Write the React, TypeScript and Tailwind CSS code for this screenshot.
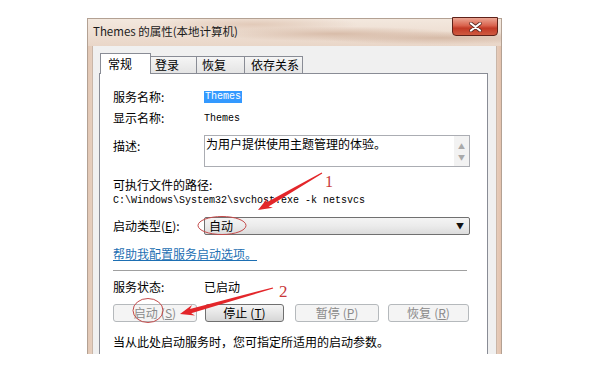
import React from 'react';

const cjk = "font-['Noto_Sans_CJK_SC','Noto_Sans',sans-serif]";
const mono = "font-['Liberation_Mono',monospace]";

// tapered arrow polygon from tail (x1,y1) to tip (x2,y2)
function arrowPoints(x1: number, y1: number, x2: number, y2: number, head = 14, headW = 11, tailW = 1.2, neckW = 4.4) {
  const dx = x2 - x1;
  const dy = y2 - y1;
  const len = Math.hypot(dx, dy);
  const ux = dx / len;
  const uy = dy / len;
  const px = -uy;
  const py = ux;
  const bx = x2 - ux * head;
  const by = y2 - uy * head;
  const cx = x2 - ux * (head - 3);
  const cy = y2 - uy * (head - 3);
  const pts = [
    [x1 + (px * tailW) / 2, y1 + (py * tailW) / 2],
    [cx + (px * neckW) / 2, cy + (py * neckW) / 2],
    [bx + (px * headW) / 2, by + (py * headW) / 2],
    [x2, y2],
    [bx - (px * headW) / 2, by - (py * headW) / 2],
    [cx - (px * neckW) / 2, cy - (py * neckW) / 2],
    [x1 - (px * tailW) / 2, y1 - (py * tailW) / 2],
  ];
  return pts.map((p) => p.map((v) => v.toFixed(1)).join(',')).join(' ');
}

const tabs = [
  { name: '登录', w: 'w-[47px]', pl: 'pl-[4px]' },
  { name: '恢复', w: 'w-[49px]', pl: 'pl-[5px]' },
  { name: '依存关系', w: 'w-[59px]', pl: 'pl-[6px]' },
];

function Btn({ label, hot, enabled, w, ml }: { label: string; hot: string; enabled?: boolean; w: string; ml: string }) {
  return (
    <div
      className={`flex h-[18px] items-center justify-center rounded-[3px] border text-[12px] leading-none ${w} ${ml} ${
        enabled
          ? 'border-[#707070] bg-[linear-gradient(180deg,#f4f4f4,#e6e6e6_50%,#d6d6d6)] text-black'
          : 'border-[#b5b9bc] bg-[#f4f4f4] text-[#8a8a8a]'
      }`}
    >
      {label}
      <span className="ml-[3px]">
        (<span className="underline">{hot}</span>)
      </span>
    </div>
  );
}

export default function App() {
  return (
    <div className={`relative h-[374px] w-[593px] overflow-hidden bg-white pt-[18px] text-black ${cjk}`}>
      {/* window */}
      <div className="ml-[87px] flex h-[336px] w-[415px] flex-col border-x border-t border-[#b3a193] bg-[linear-gradient(90deg,#e2c7b4,#ead7c9_2%,#ead7c9_98%,#e3c2ad)]">
        {/* title bar */}
        <div className="flex h-[27px] items-center bg-[radial-gradient(ellipse_at_60%_55%,#d8bca9_0%,transparent_35%),radial-gradient(ellipse_at_85%_70%,#d6baa7_0%,transparent_25%),radial-gradient(ellipse_at_40%_20%,#e2cab9_0%,transparent_30%),linear-gradient(180deg,#f3e8de,#e9d6c8)] pl-[5px]">
          <span className="pb-[1px] text-[11.5px] text-[#1a1a1a]">Themes 的属性(本地计算机)</span>
          <div className="-mt-[2px] mr-[3px] ml-auto flex h-[19px] w-[46px] items-center justify-center self-start rounded-b-[4px] border border-[#5e2219] bg-[linear-gradient(180deg,#eba593,#d9624d_45%,#c23a26_60%,#cf5a40)]">
            <svg width="13" height="10" viewBox="0 0 13 10">
              <path d="M2 1.5 L11 8.5 M11 1.5 L2 8.5" stroke="#5b2a22" strokeWidth="3.6" strokeLinecap="round" />
              <path d="M2 1.5 L11 8.5 M11 1.5 L2 8.5" stroke="#ffffff" strokeWidth="2.2" strokeLinecap="round" />
            </svg>
          </div>
        </div>

        {/* body */}
        <div className="mx-[4px] flex flex-1 flex-col border-x border-[#c9b6a8] bg-[#f0f0f0] pt-[7px] pr-[8px] pl-[6px]">
          {/* tabs */}
          <div className="flex h-[20px] items-end pl-px">
            <div className="relative z-10 -mb-px h-[21px] w-[51px] border border-b-0 border-[#898c95] bg-white pt-[1px] pl-[7px] text-[12px] leading-[18px]">
              常规
            </div>
            {tabs.map((t) => (
              <div
                key={t.name}
                className={`-ml-px h-[17px] border border-b-0 border-[#898c95] bg-[linear-gradient(180deg,#f5f5f5,#e4e4e4)] text-[12px] leading-[16px] ${t.w} ${t.pl}`}
              >
                {t.name}
              </div>
            ))}
          </div>

          {/* panel */}
          <div className="flex flex-1 flex-col border border-b-0 border-[#898c95] bg-white pt-[12px] pl-[13px] text-[12px]">
            <div className="flex h-[21px] items-center">
              <span className="w-[91px]">服务名称:</span>
              <span className={`flex h-[12px] items-center bg-[#3399ff] px-[1px] text-[10px] text-white ${mono}`}>Themes</span>
            </div>
            <div className="flex h-[22px] items-center">
              <span className="w-[91px]">显示名称:</span>
              <span className={`text-[10px] ${mono}`}>Themes</span>
            </div>

            <div className="mt-[6px] flex items-start">
              <span className="mt-[3px] w-[91px] leading-[16px]">描述:</span>
              <div className="flex h-[32px] w-[266px] border border-[#abadb3] bg-white">
                <span className="flex-1 pt-[1px] pl-[1px] leading-[14px]">为用户提供使用主题管理的体验。</span>
                <div className="flex w-[15px] flex-col items-center justify-center gap-[3px] bg-[#f2f2f2] text-[7px] leading-[8px] text-[#a9a9a9]">
                  <span>▲</span>
                  <span>▼</span>
                </div>
              </div>
            </div>

            <div className="mt-[10px] leading-[16px]">可执行文件的路径:</div>
            <div className={`text-[10px] leading-[16px] ${mono}`}>C:\Windows\System32\svchost.exe -k netsvcs</div>

            <div className="mt-[8px] flex items-center">
              <span className="w-[91px]">
                启动类型(<span className="underline">E</span>):
              </span>
              <div className="flex h-[18px] w-[266px] items-center justify-between rounded-[2px] border border-[#707070] bg-[linear-gradient(180deg,#f4f4f4,#ebebeb_50%,#dcdcdc)] pr-[5px] pl-[4px]">
                <span className="leading-none">自动</span>
                <span className="text-[8px] leading-none text-[#111]">▼</span>
              </div>
            </div>

            <div className="mt-[11px] leading-[16px]">
              <span className="text-[#1d6fb3] underline">帮助我配置服务启动选项。</span>
            </div>

            <div className="mt-[8px] h-px w-[354px] bg-[#a0a0a0]" />

            <div className="mt-[8px] flex leading-[16px]">
              <span className="w-[91px]">服务状态:</span>
              <span>已启动</span>
            </div>

            <div className="mt-[9px] flex">
              <Btn label="启动" hot="S" w="w-[84px]" ml="ml-0" />
              <Btn label="停止" hot="T" enabled w="w-[79px]" ml="ml-[8px]" />
              <Btn label="暂停" hot="P" w="w-[84px]" ml="ml-[11px]" />
              <Btn label="恢复" hot="R" w="w-[81px]" ml="ml-[9px]" />
            </div>

            <div className="mt-[12px] leading-[16px]">当从此处启动服务时，您可指定所适用的启动参数。</div>
          </div>
        </div>
      </div>

      {/* annotations drawn over the screenshot */}
      <svg className="pointer-events-none absolute inset-0" width="593" height="374" viewBox="0 0 593 374">
        <ellipse cx="222" cy="225.5" rx="24" ry="9" fill="none" stroke="#c44a4a" strokeWidth="1" />
        <ellipse cx="148" cy="310.5" rx="15" ry="12" fill="none" stroke="#c44a4a" strokeWidth="1" />
        <polygon points={arrowPoints(322, 173, 258, 210)} fill="#e3262a" />
        <polygon points={arrowPoints(273, 288, 180, 314)} fill="#e3262a" />
        <text x="325" y="187" fontFamily="'Liberation Serif', serif" fontSize="16" fill="#c8383a">
          1
        </text>
        <text x="279" y="297" fontFamily="'Liberation Serif', serif" fontSize="17" fill="#c8383a">
          2
        </text>
      </svg>
    </div>
  );
}
